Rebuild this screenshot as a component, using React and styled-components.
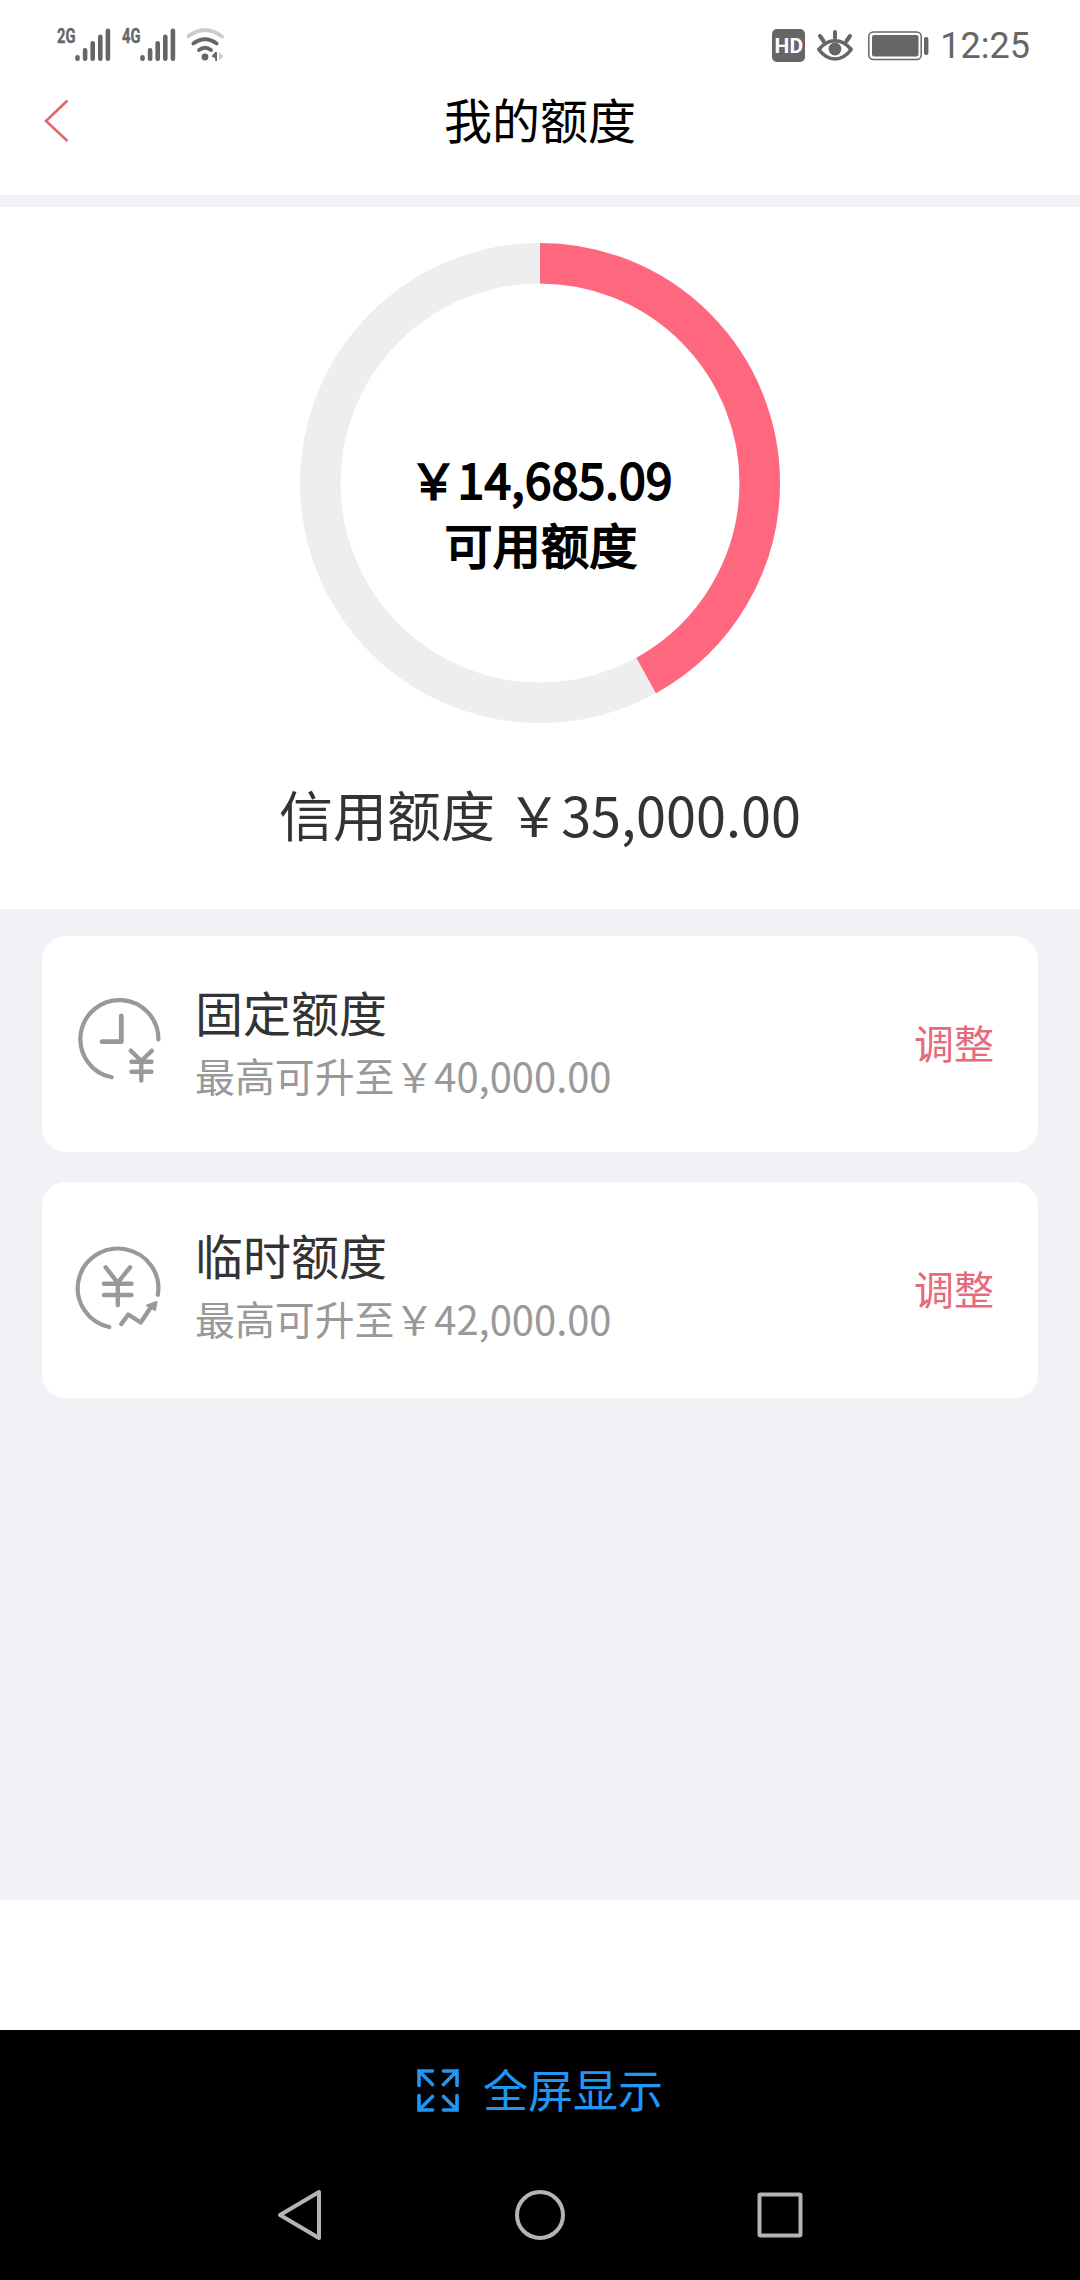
import styled, { createGlobalStyle } from 'styled-components';

const GlobalStyle = createGlobalStyle`
  * {
    box-sizing: border-box;
  }
  body {
    margin: 0;
    background-color: #fff;
    font-family: 'Noto Sans CJK SC', sans-serif;
  }
  svg {
    display: block;
  }
`;

const Screen = styled.div`
  width: 1080px;
  height: 2280px;
  display: flex;
  flex-direction: column;
  background-color: #fff;
  overflow: hidden;
`;

const StatusBar = styled.div`
  height: 88px;
  padding: 28px 50px 0 57px;
  display: flex;
  justify-content: space-between;
  color: #666;
`;

const StatusGroup = styled.div`
  height: 34px;
  display: flex;
  align-items: flex-start;
  gap: ${({ $gap }) => $gap}px;
`;

const Signal = styled.div`
  width: 54px;
  height: 34px;
  display: flex;
  align-items: flex-start;
`;

const Network = styled.span`
  width: 18px;
  font-family: 'Roboto', sans-serif;
  font-size: 21px;
  font-weight: 700;
  line-height: 16px;
  white-space: nowrap;
  transform: scaleX(0.7);
  transform-origin: left center;
  -webkit-text-stroke: 0.4px #666;
`;

const HdBadge = styled.div`
  width: 33px;
  height: 33px;
  margin-top: 1px;
  border-radius: 5px;
  background-color: #666;
  color: #fff;
  font-family: 'Roboto', sans-serif;
  font-size: 21px;
  font-weight: 700;
  line-height: 34px;
  text-align: center;
`;

const Battery = styled.div`
  margin: 0 -3px 0 3px;
`;

const Time = styled.span`
  margin-left: 3px;
  font-family: 'Roboto', sans-serif;
  font-size: 36px;
  line-height: 37px;
`;

const Header = styled.header`
  height: 107px;
  padding: 0 44px;
  display: grid;
  grid-template-columns: 48px 1fr 48px;
`;

const BackButton = styled.button`
  height: 66px;
  padding: 0;
  border: none;
  background: none;
  cursor: pointer;
`;

const Title = styled.h1`
  margin: 0;
  color: #000;
  font-size: 48px;
  font-weight: 400;
  line-height: 61px;
  text-align: center;
`;

const Divider = styled.div`
  height: 12px;
  background-color: #f1f2f6;
`;

const Summary = styled.section`
  height: 702px;
  padding-top: 36px;
  display: flex;
  flex-direction: column;
  align-items: center;
`;

const ChartWrapper = styled.div`
  width: 480px;
  height: 480px;
  display: grid;
  > * {
    grid-area: 1 / 1;
  }
`;

const ChartLabel = styled.div`
  padding: 203px 0 0 2px;
  color: #000;
  font-size: 48px;
  letter-spacing: 0.2px;
  line-height: 65px;
  text-align: center;
  -webkit-text-stroke: 1.8px #000;
`;

const CreditTotal = styled.p`
  margin: 51px 0 0;
  color: #333;
  font-size: 54px;
  line-height: 80px;
  white-space: pre;
`;

const QuotaList = styled.main`
  height: 991px;
  padding: 27px 42px 0;
  display: flex;
  flex-direction: column;
  gap: 30px;
  background-color: #f1f2f6;
`;

const QuotaCard = styled.article`
  height: 216px;
  padding-right: 44px;
  display: flex;
  align-items: center;
  border-radius: 24px;
  background-color: #fff;
`;

const IconBox = styled.div`
  width: 153px;
  padding-left: 30px;
`;

const QuotaInfo = styled.div`
  height: 216px;
  padding-top: ${({ $top }) => $top}px;
  flex: 1;
`;

const QuotaName = styled.div`
  color: #333;
  font-size: 48px;
  line-height: 66px;
`;

const QuotaLimit = styled.div`
  margin-top: 1px;
  color: #999;
  font-size: 39.9px;
  line-height: 60px;
`;

const AdjustButton = styled.button`
  padding: 0 0 4px;
  border: none;
  background: none;
  color: #e66a7c;
  font-family: inherit;
  font-size: 40px;
  line-height: 60px;
  cursor: pointer;
`;

const Blank = styled.div`
  height: 130px;
`;

const BottomBar = styled.footer`
  height: 250px;
  background-color: #000;
`;

const FullScreen = styled.div`
  height: 120px;
  display: flex;
  align-items: center;
  justify-content: center;
  gap: 24px;
  color: #2196f3;
  font-size: 45px;
  line-height: 64px;

  span {
    padding-bottom: 2px;
  }
`;

const NavButtons = styled.nav`
  height: 130px;
  padding: 0 240px;
  display: grid;
  grid-template-columns: repeat(3, 120px);
  justify-content: space-between;
  justify-items: center;
  align-items: center;
`;

const SignalBars = () => (
  <svg width="36" height="34" viewBox="0 0 36 34" stroke="#666" strokeWidth="4.6" strokeLinecap="round">
    <path d="M2.5 29.2v1.5M10.1 22.3v8.4M17.7 15.3v15.4M25.3 8.8v21.9M32.9 2.7v28" />
  </svg>
);

const WifiIcon = () => (
  <svg width="40" height="34" viewBox="2 0 40 34" fill="none" strokeWidth="3.8" strokeLinecap="round">
    <path d="M3 8.500Q20 -4.500 37 8.500" stroke="#ccc" />
    <path d="M8.300 15.500Q20 7 31.700 15.500" stroke="#666" />
    <path d="M14 22Q20 17.500 26 22" stroke="#666" />
    <circle cx="20" cy="29" r="3.400" fill="#666" />
    <path d="M32 24v9h-1.800v-2.500l-3.700-2.200 3.700-4.300z" fill="#666" />
    <path d="M34 24l4.500 4-4.500 5z" fill="#ccc" />
  </svg>
);

const EyeIcon = () => (
  <svg width="38" height="34" viewBox="0 0 38 34" fill="none" stroke="#666" strokeWidth="4" strokeLinecap="round">
    <path d="M2.800 21.500Q10 12.800 19 12.800T35.200 21.500Q28 31 19 31T2.800 21.500z" strokeLinejoin="round" strokeWidth="3.600" />
    <circle cx="19" cy="21" r="6.400" fill="#666" stroke="none" />
    <path d="M19 4v6M4 8l3.500 5M34 8l-3.500 5" />
  </svg>
);

const BatteryIcon = () => (
  <svg width="61" height="34" viewBox="0 0 61 34">
    <rect x="0.8" y="4" width="52.400" height="27.500" rx="4.500" fill="none" stroke="#666" strokeWidth="1.500" />
    <rect x="4" y="7" width="46.500" height="21.500" rx="2" fill="#666" />
    <rect x="56" y="9" width="4.400" height="18" rx="2" fill="#666" />
  </svg>
);

const BackIcon = () => (
  <svg width="26" height="44" viewBox="0 0 26 44" fill="none" stroke="#e4656a" strokeWidth="2.600">
    <path d="M23.500 1.500L2 22l21.500 20" />
  </svg>
);

const ClockYenIcon = () => (
  <svg width="96" height="96" viewBox="0 0 96 96" fill="none" stroke="#999" strokeWidth="4.2" strokeLinecap="round">
    <path d="M86.400 43.500A39 39 0 1 0 39.700 81.300" />
    <path d="M49.300 20v25.700H30" strokeWidth="4.800" strokeLinejoin="round" />
    <path d="M58.800 54.700l10.500 10.300 10.500-10.300M69.300 65v19.500M59.500 65.700h20M59.500 75.700h20" strokeWidth="4.400" />
  </svg>
);

const YenTrendIcon = () => (
  <svg width="96" height="96" viewBox="0 0 96 96" fill="none" stroke="#999" strokeWidth="4.2" strokeLinecap="round">
    <path d="M85.800 52.800A40.300 39.700 0 1 0 37.300 85" />
    <path d="M33.700 25.300l12 15.500 12.300-15.500M45.800 40v23M32 41.700h27.500M32 53h27.500" strokeWidth="4.400" />
    <path d="M49.300 82l7-9.500 12.400 8 11-16.500" strokeLinejoin="round" strokeWidth="4.400" />
    <path d="M84.500 60l-1.500 8-8-4.500z" fill="#999" strokeWidth="2" strokeLinejoin="round" />
  </svg>
);

const ExpandIcon = () => (
  <svg width="42" height="43" viewBox="0 0 42 43" fill="none" stroke="#2196f3" strokeWidth="3.600" strokeLinecap="round">
    <path d="M15.500 2H2v14.500M2 2l13.500 13.500M26.500 2h13.500v14.500M40 2L26.500 15.500M2 26.500v14.500h13.500M2 41l13.500-13.500M40 26.500v14.500H26.500M40 41L26.500 27.500" />
  </svg>
);

const RADIUS = 219.75;
const CIRCUMFERENCE = 2 * Math.PI * RADIUS;

const DonutChart = ({ used, total }) => (
  <svg width="480" height="480" viewBox="0 0 480 480" fill="none" strokeWidth="40.5">
    <circle cx="240" cy="240" r={RADIUS} stroke="#eee" />
    <circle
      cx="240"
      cy="240"
      r={RADIUS}
      stroke="#ff677f"
      strokeDasharray={`${(used / total) * CIRCUMFERENCE} ${CIRCUMFERENCE}`}
      transform="rotate(-90 240 240)"
    />
  </svg>
);

const quotas = [
  { name: '固定额度', limit: '最高可升至￥40,000.00', icon: <ClockYenIcon />, top: 42 },
  { name: '临时额度', limit: '最高可升至￥42,000.00', icon: <YenTrendIcon />, top: 39 },
];

export default function App() {
  return (
    <Screen>
      <GlobalStyle />
      <StatusBar>
        <StatusGroup $gap={11}>
          <Signal>
            <Network>2G</Network>
            <SignalBars />
          </Signal>
          <Signal>
            <Network>4G</Network>
            <SignalBars />
          </Signal>
          <WifiIcon />
        </StatusGroup>
        <StatusGroup $gap={11}>
          <HdBadge>HD</HdBadge>
          <EyeIcon />
          <Battery>
            <BatteryIcon />
          </Battery>
          <Time>12:25</Time>
        </StatusGroup>
      </StatusBar>
      <Header>
        <BackButton aria-label="返回">
          <BackIcon />
        </BackButton>
        <Title>我的额度</Title>
      </Header>
      <Divider />
      <Summary>
        <ChartWrapper>
          <DonutChart used={14685.09} total={35000} />
          <ChartLabel>
            <div>￥14,685.09</div>
            <div>可用额度</div>
          </ChartLabel>
        </ChartWrapper>
        <CreditTotal>信用额度 ￥35,000.00</CreditTotal>
      </Summary>
      <QuotaList>
        {quotas.map(({ name, limit, icon, top }) => (
          <QuotaCard key={name}>
            <IconBox>{icon}</IconBox>
            <QuotaInfo $top={top}>
              <QuotaName>{name}</QuotaName>
              <QuotaLimit>{limit}</QuotaLimit>
            </QuotaInfo>
            <AdjustButton>调整</AdjustButton>
          </QuotaCard>
        ))}
      </QuotaList>
      <Blank />
      <BottomBar>
        <FullScreen>
          <ExpandIcon />
          <span>全屏显示</span>
        </FullScreen>
        <NavButtons>
          <svg width="46" height="52" viewBox="0 0 46 52" fill="none" stroke="#b4b4b4" strokeWidth="4" strokeLinejoin="round">
            <path d="M42 3v46L3 26z" />
          </svg>
          <svg width="50" height="50" viewBox="0 0 50 50" fill="none" stroke="#b4b4b4" strokeWidth="4">
            <circle cx="25" cy="25" r="23" />
          </svg>
          <svg width="46" height="46" viewBox="0 0 46 46" fill="none" stroke="#b4b4b4" strokeWidth="4">
            <rect x="2.500" y="2.500" width="41" height="41" rx="1" />
          </svg>
        </NavButtons>
      </BottomBar>
    </Screen>
  );
}
